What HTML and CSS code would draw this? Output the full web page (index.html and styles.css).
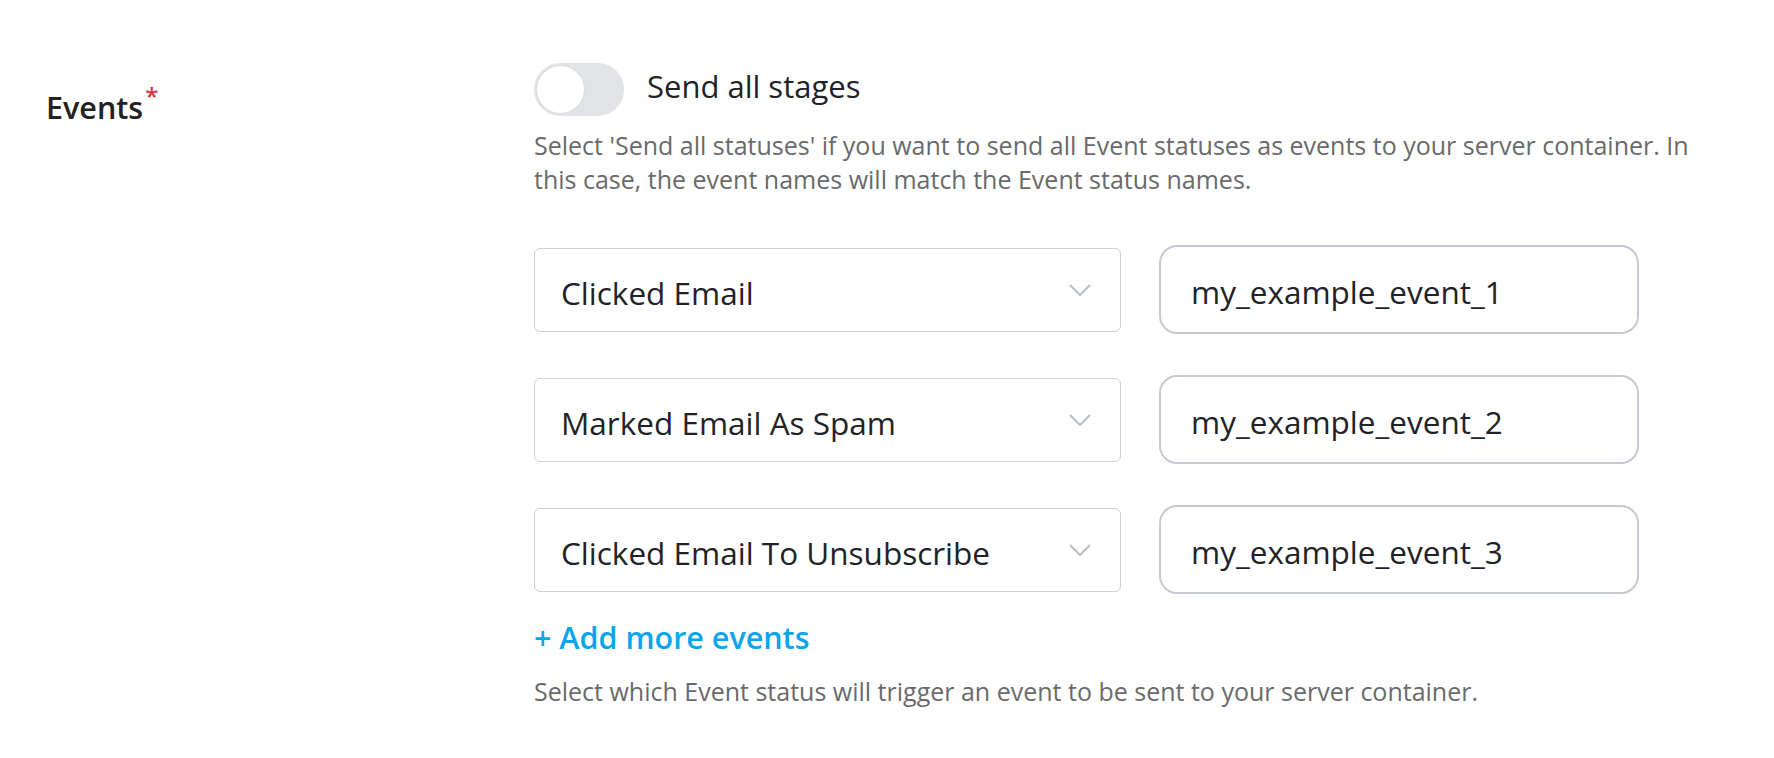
FILE: index.html
```html
<!DOCTYPE html>
<html lang="en">
<head>
    <meta charset="UTF-8">
    <meta name="viewport" content="width=device-width, initial-scale=1.0">
    <title>Events</title>
    <link rel="stylesheet" href="styles.css">
</head>
<body>

    <!-- Events field -->
    <div class="field">
        <div class="field-label">Events<span class="required">*</span></div>

        <div class="field-body">
            <div class="toggle-row">
                <span class="toggle"><span class="toggle-knob"></span></span>
                <span class="toggle-text">Send all stages</span>
            </div>
            <p class="hint hint-top">Select 'Send all statuses' if you want to send all Event statuses as events to your server container. In this case, the event names will match the Event status names.</p>

            <div class="event-list">
                <div class="event-row">
                    <div class="select">
                        <span>Clicked Email</span>
                        <svg class="chevron" width="22" height="12" viewBox="0 0 22 12"><path d="M1 1l10 10 10-10" fill="none" stroke="#b7bdc7" stroke-width="2"/></svg>
                    </div>
                    <div class="text-input">my_example_event_1</div>
                </div>
                <div class="event-row">
                    <div class="select">
                        <span>Marked Email As Spam</span>
                        <svg class="chevron" width="22" height="12" viewBox="0 0 22 12"><path d="M1 1l10 10 10-10" fill="none" stroke="#b7bdc7" stroke-width="2"/></svg>
                    </div>
                    <div class="text-input">my_example_event_2</div>
                </div>
                <div class="event-row">
                    <div class="select">
                        <span>Clicked Email To Unsubscribe</span>
                        <svg class="chevron" width="22" height="12" viewBox="0 0 22 12"><path d="M1 1l10 10 10-10" fill="none" stroke="#b7bdc7" stroke-width="2"/></svg>
                    </div>
                    <div class="text-input">my_example_event_3</div>
                </div>
            </div>

            <a class="add-link" href="#">+ Add more events</a>
            <p class="hint hint-bottom">Select which Event status will trigger an event to be sent to your server container.</p>
        </div>
    </div>

</body>
</html>
```

FILE: styles.css
```css
body {
    margin: 0;
    background: #fff;
    font-family: "Open Sans", "Liberation Sans", sans-serif;
    color: #1f2328;
}
.field {
    display: flex;
}
.field-label {
    width: 488px;
    padding-left: 46px;
    padding-top: 76px;
    font-size: 30.5px;
    line-height: 40px;
    font-weight: 600;
    color: #222;
}
.required {
    color: #e0323f;
    font-size: 24px;
    vertical-align: 14px;
    margin-left: 2px;
}
.field-body {
    display: flex;
    flex-direction: column;
    width: 1180px;
    padding-top: 63px;
}
.toggle-row {
    display: flex;
    align-items: center;
    gap: 23px;
}
.toggle {
    display: flex;
    align-items: center;
    width: 90px;
    height: 53px;
    padding: 0 3px;
    box-sizing: border-box;
    border-radius: 27px;
    background: #e1e3e7;
}
.toggle-knob {
    width: 47px;
    height: 47px;
    border-radius: 50%;
    background: #fff;
    box-shadow: 0 0 0 1px #d9dce1;
}
.toggle-text {
    font-size: 31px;
    margin-top: -8px;
}
.hint {
    margin: 0;
    font-size: 25px;
    line-height: 34px;
    color: #6a6a6a;
}
.hint-top {
    margin-top: 12px;
}
.event-list {
    display: flex;
    flex-direction: column;
    gap: 41px;
    margin-top: 49px;
}
.event-row {
    display: flex;
    align-items: center;
    gap: 38px;
}
.select {
    display: flex;
    align-items: center;
    justify-content: space-between;
    width: 587px;
    height: 84px;
    box-sizing: border-box;
    padding: 0 29px 0 26px;
    border: 1.5px solid #cdd1d8;
    border-radius: 6px;
    font-size: 31.5px;
}
.select span {
    padding-top: 6px;
}
.text-input {
    display: flex;
    align-items: center;
    width: 480px;
    height: 89px;
    box-sizing: border-box;
    padding: 3px 0 0 30px;
    border: 2px solid #c5cad2;
    border-radius: 18px;
    font-size: 31.5px;
}
.add-link {
    align-self: flex-start;
    margin-top: 23px;
    font-size: 30.5px;
    line-height: 40px;
    font-weight: 600;
    color: #0ba5ee;
    text-decoration: none;
}
.hint-bottom {
    margin-top: 17px;
}
```
